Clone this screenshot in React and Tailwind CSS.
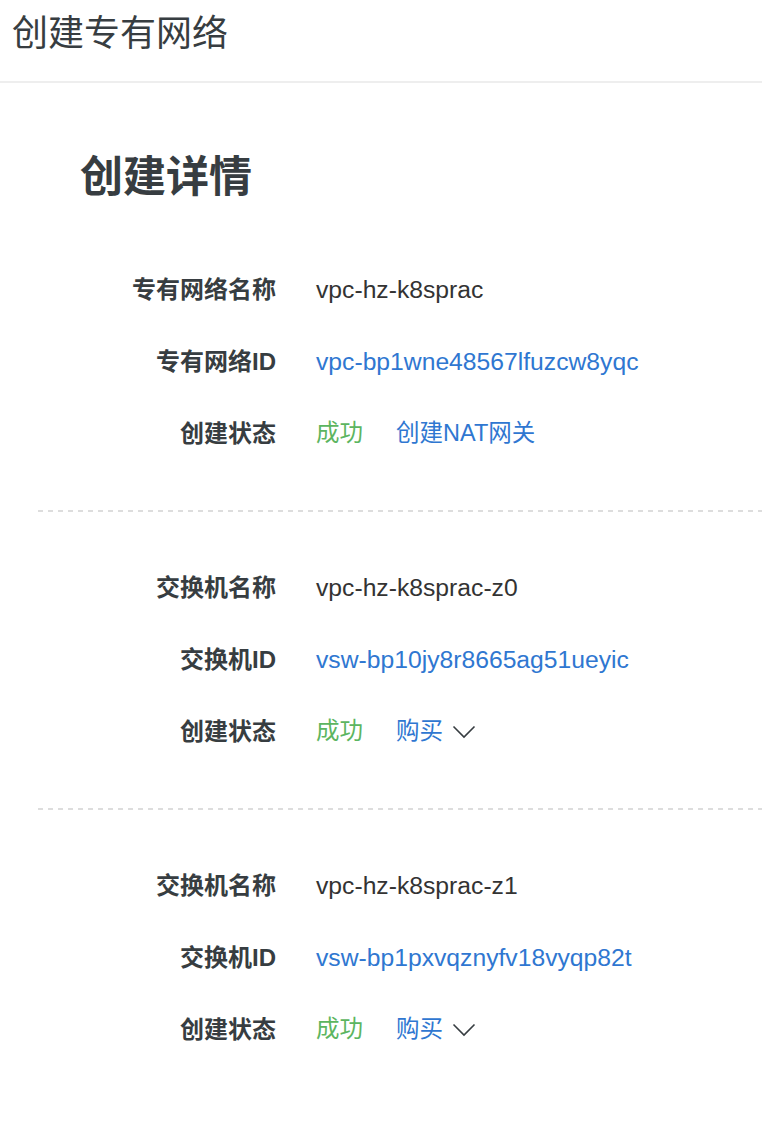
import React from "react";

const font = { fontFamily: '"Liberation Sans", "Noto Sans CJK SC", sans-serif' };

function Chevron() {
  return (
    <svg width="24" height="14" viewBox="0 0 24 14" className="ml-[9px]">
      <path d="M1.5 1.5 L12 12 L22.5 1.5" fill="none" stroke="#373d41" strokeWidth="1.6" />
    </svg>
  );
}

function Row({ label, children }) {
  return (
    <div className="flex h-[72px] items-center pt-[2px]">
      <div className="w-[276px] shrink-0 text-right text-[24px] font-bold text-[#373d41]">{label}</div>
      <div className="ml-[40px] flex items-center text-[23.5px] text-[#333]">{children}</div>
    </div>
  );
}

function Value({ link, children }) {
  return (
    <span className={link ? "text-[24.7px] text-[#2f77d1]" : "text-[24.7px] text-[#333]"}>{children}</span>
  );
}

function Status({ action, dropdown }) {
  return (
    <>
      <span className="text-[#5cb560]">成功</span>
      <span className="ml-[33px] text-[#2f77d1]">{action}</span>
      {dropdown && <Chevron />}
    </>
  );
}

function Section({ rows }) {
  return <div className="pt-[39px] pb-[41px]">{rows}</div>;
}

function Divider() {
  return (
    <div className="ml-[38px] h-[2px] bg-[repeating-linear-gradient(to_right,#dddddd_0_5px,transparent_5px_10px)]" />
  );
}

export default function App() {
  return (
    <div className="min-h-[1132px] bg-white" style={font}>
      <div className="h-[83px] border-b-2 border-[#eeeeee] pl-[12px] text-[36px] leading-[68px] text-[#373d41]">
        创建专有网络
      </div>
      <div className="ml-[80px] mt-[73px] text-[43px] font-bold leading-[43px] text-[#373d41]">创建详情</div>
      <div className="mt-[15px]">
        <Section
          rows={
            <>
              <Row label="专有网络名称">
                <Value>vpc-hz-k8sprac</Value>
              </Row>
              <Row label="专有网络ID">
                <Value link>vpc-bp1wne48567lfuzcw8yqc</Value>
              </Row>
              <Row label="创建状态">
                <Status action="创建NAT网关" />
              </Row>
            </>
          }
        />
        <Divider />
        <Section
          rows={
            <>
              <Row label="交换机名称">
                <Value>vpc-hz-k8sprac-z0</Value>
              </Row>
              <Row label="交换机ID">
                <Value link>vsw-bp10jy8r8665ag51ueyic</Value>
              </Row>
              <Row label="创建状态">
                <Status action="购买" dropdown />
              </Row>
            </>
          }
        />
        <Divider />
        <Section
          rows={
            <>
              <Row label="交换机名称">
                <Value>vpc-hz-k8sprac-z1</Value>
              </Row>
              <Row label="交换机ID">
                <Value link>vsw-bp1pxvqznyfv18vyqp82t</Value>
              </Row>
              <Row label="创建状态">
                <Status action="购买" dropdown />
              </Row>
            </>
          }
        />
      </div>
    </div>
  );
}
